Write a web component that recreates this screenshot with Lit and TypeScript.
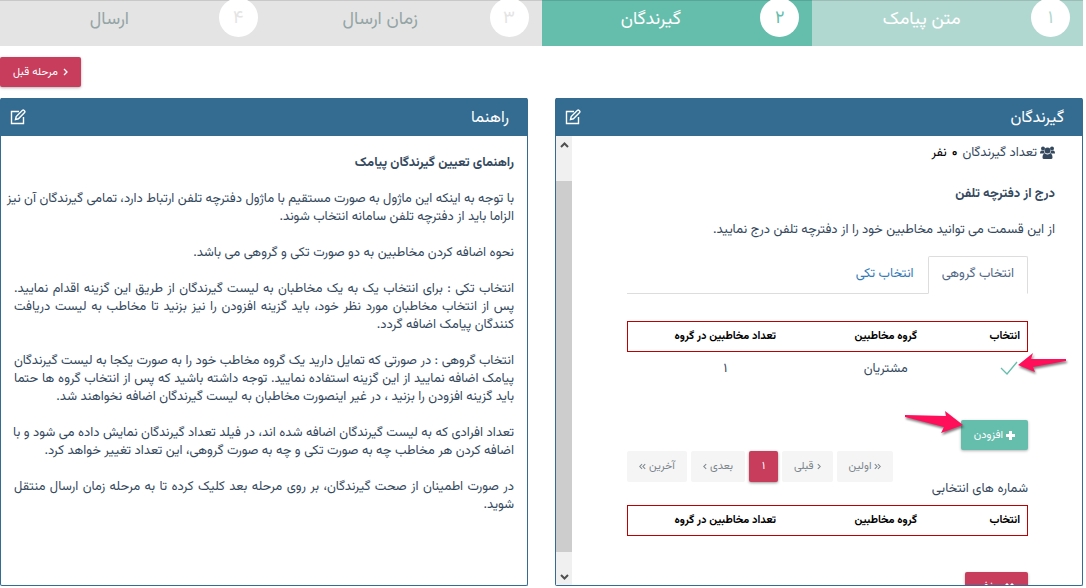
import { LitElement, html, svg, css } from "lit";
import { customElement, state } from "lit/decorators.js";
import { classMap } from "lit/directives/class-map.js";

const steps = [
  { n: "۱", label: "متن پیامک", kind: "done" },
  { n: "۲", label: "گیرندگان", kind: "active" },
  { n: "۳", label: "زمان ارسال", kind: "todo" },
  { n: "۴", label: "ارسال", kind: "todo" },
];

// Each paragraph is a list of lines; every line but the last is justified.
const guide = [
  [
    "با توجه به اینکه این ماژول به صورت مستقیم با ماژول دفترچه تلفن ارتباط دارد، تمامی گیرندگان آن نیز",
    "الزاما باید از دفترچه تلفن سامانه انتخاب شوند.",
  ],
  ["نحوه اضافه کردن مخاطبین به دو صورت تکی و گروهی می باشد."],
  [
    "انتخاب تکی : برای انتخاب یک به یک مخاطبان به لیست گیرندگان از طریق این گزینه اقدام نمایید.",
    "پس از انتخاب مخاطبان مورد نظر خود، باید گزینه افزودن را نیز بزنید تا مخاطب به لیست دریافت",
    "کنندگان پیامک اضافه گردد.",
  ],
  [
    "انتخاب گروهی : در صورتی که تمایل دارید یک گروه مخاطب خود را به صورت یکجا به لیست گیرندگان",
    "پیامک اضافه نمایید از این گزینه استفاده نمایید. توجه داشته باشید که پس از انتخاب گروه ها حتما",
    "باید گزینه افزودن را بزنید ، در غیر اینصورت مخاطبان به لیست گیرندگان اضافه نخواهند شد.",
  ],
  [
    "تعداد افرادی که به لیست گیرندگان اضافه شده اند، در فیلد تعداد گیرندگان نمایش داده می شود و با",
    "اضافه کردن هر مخاطب چه به صورت تکی و چه به صورت گروهی، این تعداد تغییر خواهد کرد.",
  ],
  [
    "در صورت اطمینان از صحت گیرندگان، بر روی مرحله بعد کلیک کرده تا به مرحله زمان ارسال منتقل",
    "شوید.",
  ],
];

const editIcon = html`<svg class="edit" viewBox="0 0 16 16" aria-hidden="true">
  <path d="M9 2.500H1.500v12h12V8" /><path d="M5.500 10.500l.7-3L12.500 1.200q.8-.6 1.600.2l.5.500q.7.800 0 1.500L8.400 9.800z" />
</svg>`;

const angle = (dir: "left" | "right", double = false) => html`<svg
  class=${classMap({ angle: true, double })}
  viewBox=${double ? "0 0 9 8" : "0 0 5 8"}
  aria-hidden="true"
>
  ${dir === "left"
    ? svg`<path d="M4 1L1 4l3 3" />${double ? svg`<path d="M8 1L5 4l3 3" />` : ""}`
    : svg`<path d="M1 1l3 3-3 3" />${double ? svg`<path d="M5 1l3 3-3 3" />` : ""}`}
</svg>`;

@customElement("app-root")
export class AppRoot extends LitElement {
  @state() private tab = 0;

  static styles = css`
    :host {
      display: block;
      direction: rtl;
      box-sizing: border-box;
      padding-right: 3px;
      font-family: Vazirmatn, "Noto Sans Arabic", "Noto Sans", "DejaVu Sans", sans-serif;
      font-size: 13px;
      line-height: 18px;
      color: #34495e;
      background: #fff;
    }
    * { box-sizing: border-box; }
    button { font: inherit; border: 0; cursor: pointer; }
    svg { flex: none; }

    .steps {
      display: grid;
      grid-template-columns: repeat(4, 1fr);
      height: 46px;
      margin: 0 0 11px;
      padding: 0;
      list-style: none;
      overflow: hidden;
    }
    .step {
      display: flex;
      align-items: flex-start;
      padding-right: 13px;
      font-size: 18px;
      box-shadow: inset 0 1px rgba(0, 0, 0, 0.12);
    }
    .step .label { flex: 1; text-align: center; line-height: 41px; }
    .num {
      width: 39px;
      height: 39px;
      margin-top: -2px;
      border-radius: 50%;
      background: #fff;
      text-align: center;
      line-height: 42px;
    }
    .done { background: #b1d8d0; color: #fff; }
    .done .num { color: #b1d8d0; }
    .active { background: #65bdac; color: #fff; }
    .active .num { color: #65bdac; }
    .todo { background: #e4e4e4; color: #95a5a6; }
    .todo .num { color: #e4e4e4; }

    .btn {
      display: inline-flex;
      align-items: center;
      justify-content: center;
      gap: 3px;
      height: 30px;
      padding: 2px 13px 0;
      border-radius: 2px;
      color: #fff;
      font-size: 11px;
      box-shadow: 0 1px 3px rgba(0, 0, 0, 0.3);
    }
    .red { background: #c83c5c; }
    .green { background: #65bdac; }
    .bar { display: flex; justify-content: flex-end; margin-bottom: 11px; }
    .bar .btn { gap: 5px; }

    .panels { display: grid; grid-template-columns: 1fr 1fr; gap: 27px; }
    .panel {
      border: 1px solid #336b91;
      border-top: 0;
      border-radius: 2px;
      min-width: 0;
    }
    .head {
      display: flex;
      justify-content: space-between;
      align-items: center;
      height: 38px;
      padding: 0 18px 0 9px;
      background: #336b91;
      color: #fff;
    }
    .head h2 { margin: 0; padding-top: 3px; font-size: 16px; font-weight: 400; }
    .edit { width: 16px; height: 16px; fill: none; stroke: #fff; stroke-width: 1.4; }
    .body { height: 449px; overflow: hidden; }

    .guide { padding: 18px 13px; }
    .guide h3, .guide p { margin: 0 0 18px; }
    .line { display: block; white-space: nowrap; text-align-last: justify; }
    .line:last-child { text-align-last: start; }
    h3 { font-size: 13px; font-weight: 700; margin: 0; }

    .scroller { display: flex; }
    .content { flex: 1; min-width: 0; padding: 8px 27px 0 28px; }
    .track {
      width: 16px;
      display: flex;
      flex-direction: column;
      align-items: stretch;
      background: #f0f0f0;
    }
    .track button { height: 17px; padding: 0; background: none; display: grid; place-items: center; }
    .track svg { width: 9px; height: 6px; fill: none; stroke: #505050; stroke-width: 2; }
    .thumb { height: 371px; margin-top: 28px; background: #cdcdcd; }
    .track .down { margin-top: auto; }

    .count { display: flex; align-items: center; gap: 3px; margin: 0 0 23px; }
    .users { width: 15px; height: 13px; margin-bottom: 2px; fill: #34495e; }
    .count span { color: #000; }
    .count .zero { margin: 0 2px; font-weight: 700; }
    .intro { margin: 18px 0 17px; }
    .inner { padding: 0 27px; }

    .tabs { display: flex; height: 38px; border-bottom: 1px solid #ddd; }
    .tab {
      height: 38px;
      padding: 0 13px 2px;
      border: 1px solid transparent;
      border-radius: 2px 2px 0 0;
      background: none;
      color: #337ab7;
    }
    .tab.on { border-color: #ddd; border-bottom-color: #fff; background: #fff; color: #4f6785; }

    table { width: 100%; border-collapse: collapse; table-layout: fixed; }
    thead { outline: 1px solid #c00000; outline-offset: -1px; color: #000; font-size: 11px; }
    th, td { height: 31px; padding: 0 8px; text-align: center; }
    td { padding-top: 2px; }
    th:first-child, td:first-child { width: 20%; text-align: right; }
    th:nth-child(2) { width: 31%; }
    .first { margin-top: 27px; }
    .pick { position: relative; display: inline-grid; vertical-align: middle; margin-right: 2px; }
    .pick input, .pick .tick { grid-area: 1 / 1; width: 18px; height: 14px; margin: 0; }
    .pick input { appearance: none; }
    .tick { fill: none; stroke: #65bdac; stroke-width: 1.3; pointer-events: none; visibility: hidden; }
    input:checked + .tick { visibility: visible; }

    .arrow {
      position: absolute;
      fill: #ff0f5a;
      filter: drop-shadow(1px 2px 1px rgba(0, 0, 0, 0.5));
      pointer-events: none;
    }
    .arrow.a { left: 17px; top: -8px; width: 50px; height: 20px; }
    .arrow.b { right: 64px; top: -9px; width: 60px; height: 24px; }

    .add { position: relative; display: flex; margin-top: 37px; }
    .plus { width: 9px; height: 9px; margin-bottom: 2px; fill: #fff; }
    .pages { display: flex; justify-content: flex-end; gap: 4px; padding: 0; margin: 1px 0 0; list-style: none; }
    .page {
      display: flex;
      align-items: center;
      justify-content: center;
      gap: 3px;
      min-width: 29px;
      height: 31px;
      padding: 0 12px;
      border-radius: 2px;
      background: #f5f5f5;
      color: #7b858d;
      font-size: 11px;
    }
    .page.now { padding: 0; background: #c83c5c; color: #fff; box-shadow: 0 1px 3px rgba(0, 0, 0, 0.4); }
    .angle { width: 4px; height: 7px; fill: none; stroke: currentColor; stroke-width: 1.3; }
    .bar .angle { width: 5px; height: 8px; margin-bottom: 2px; }
    .angle.double { width: 7px; }
    .chosen { margin: -2px 0 7px; }
    .remove { margin-top: 36px; padding: 2px 14px 0; }
  `;

  private headRow() {
    return html`<thead>
      <tr><th scope="col">انتخاب</th><th scope="col">گروه مخاطبین</th><th scope="col">تعداد مخاطبین در گروه</th></tr>
    </thead>`;
  }

  render() {
    return html`
      <ol class="steps">
        ${steps.map(
          (s) => html`<li class="step ${s.kind}"><span class="num">${s.n}</span><span class="label">${s.label}</span></li>`
        )}
      </ol>
      <div class="bar"><button class="btn red">${angle("right")}مرحله قبل</button></div>
      <div class="panels">
        <section class="panel">
          <header class="head"><h2>گیرندگان</h2>${editIcon}</header>
          <div class="body scroller">
            <div class="content">
              <p class="count">
                <svg class="users" viewBox="0 0 30 26" aria-hidden="true">
                  <circle cx="6" cy="5" r="4" /><circle cx="24" cy="5" r="4" /><circle cx="15" cy="9" r="6" />
                  <path d="M0 15q0-6 4-6 2 1 4 .5Q8 13 10 15H1zM30 15q0-6-4-6-2 1-4 .5 0 3.500-2 5.500h9zM5 23q0-8 5.500-8 4.500 3.500 9 0Q25 15 25 23q0 3-3 3H8q-3 0-3-3z" />
                </svg>
                تعداد گیرندگان <span class="zero">۰</span> <span>نفر</span>
              </p>
              <h3>درج از دفترچه تلفن</h3>
              <p class="intro">از این قسمت می توانید مخاطبین خود را از دفترچه تلفن درج نمایید.</p>
              <div class="inner">
                <div class="tabs" role="tablist">
                  ${["انتخاب گروهی", "انتخاب تکی"].map(
                    (t, i) => html`<button
                      role="tab"
                      aria-selected=${this.tab === i}
                      class=${classMap({ tab: true, on: this.tab === i })}
                      @click=${() => (this.tab = i)}
                    >${t}</button>`
                  )}
                </div>
                <table class="first">
                  ${this.headRow()}
                  <tbody>
                    <tr>
                      <td>
                        <label class="pick">
                          <input type="checkbox" aria-label="مشتریان" checked />
                          <svg class="tick" viewBox="0 0 18 14" aria-hidden="true"><path d="M1 7l6 6L17 1" /></svg>
                          <svg class="arrow a" viewBox="0 0 50 20" aria-hidden="true">
                            <path d="M1 12L16 0l-2 6 35 0v2L16 14l2 5z" />
                          </svg>
                        </label>
                      </td>
                      <td>مشتریان</td>
                      <td>۱</td>
                    </tr>
                  </tbody>
                </table>
                <div class="add">
                  <button class="btn green">
                    <svg class="plus" viewBox="0 0 9 9" aria-hidden="true"><path d="M3 0h3v3h3v3H6v3H3V6H0V3h3z" /></svg>افزودن
                  </button>
                  <svg class="arrow b" viewBox="0 0 60 24" aria-hidden="true">
                    <path d="M1 4l41 1-1-5 18 14-22 8 3-6L1 6z" />
                  </svg>
                </div>
                <ul class="pages">
                  <li><button class="page">${angle("right", true)}اولین</button></li>
                  <li><button class="page">${angle("right")}قبلی</button></li>
                  <li><button class="page now" aria-current="page">۱</button></li>
                  <li><button class="page">بعدی${angle("left")}</button></li>
                  <li><button class="page">آخرین${angle("left", true)}</button></li>
                </ul>
                <p class="chosen">شماره های انتخابی</p>
                <table>${this.headRow()}</table>
                <button class="btn red remove">
                  <svg class="plus" viewBox="0 0 9 9" aria-hidden="true"><path d="M2 0l2.500 2.500L7 0l2 2-2.500 2.500L9 7 7 9 4.500 6.500 2 9 0 7l2.500-2.500L0 2z" /></svg>حذف
                </button>
              </div>
            </div>
            <div class="track">
              <button aria-label="بالا"><svg viewBox="0 0 9 6"><path d="M1 5l3.500-3.500L8 5" /></svg></button>
              <div class="thumb"></div>
              <button class="down" aria-label="پایین"><svg viewBox="0 0 9 6"><path d="M1 1l3.500 3.500L8 1" /></svg></button>
            </div>
          </div>
        </section>
        <section class="panel">
          <header class="head"><h2>راهنما</h2>${editIcon}</header>
          <div class="body guide">
            <h3>راهنمای تعیین گیرندگان پیامک</h3>
            ${guide.map((p) => html`<p>${p.map((l) => html`<span class="line">${l}</span>`)}</p>`)}
          </div>
        </section>
      </div>
    `;
  }
}
